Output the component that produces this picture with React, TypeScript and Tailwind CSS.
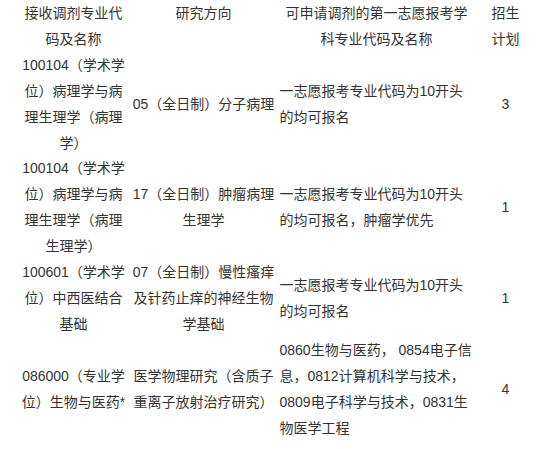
const rows: { major: string; dir: string; first: string; plan: string }[] = [
  {
    major: "100104（学术学位）病理学与病理生理学（病理学）",
    dir: "05（全日制）分子病理",
    first: "一志愿报考专业代码为10开头的均可报名",
    plan: "3",
  },
  {
    major: "100104（学术学位）病理学与病理生理学（病理生理学）",
    dir: "17（全日制）肿瘤病理生理学",
    first: "一志愿报考专业代码为10开头的均可报名，肿瘤学优先",
    plan: "1",
  },
  {
    major: "100601（学术学位）中西医结合基础",
    dir: "07（全日制）慢性瘙痒及针药止痒的神经生物学基础",
    first: "一志愿报考专业代码为10开头的均可报名",
    plan: "1",
  },
  {
    major: "086000（专业学位）生物与医药*",
    dir: "医学物理研究（含质子重离子放射治疗研究）",
    first:
      "0860生物与医药， 0854电子信息，0812计算机科学与技术，0809电子科学与技术，0831生物医学工程",
    plan: "4",
  },
];

export default function App() {
  return (
    <div
      className="min-h-screen bg-white pt-[1px] text-[14px] leading-[25.9px] text-[#333]"
      style={{ fontFamily: "'Liberation Sans', 'Noto Sans CJK SC', sans-serif" }}
    >
      <div className="ml-[17px] grid grid-cols-[113px_147px_199px_59px] items-center">
        <div className="px-[2.5px] text-center">接收调剂专业代码及名称</div>
        <div className="self-start px-[2.5px] text-center">研究方向</div>
        <div className="px-[2.5px] text-center">
          可申请调剂的第一志愿报考学科专业代码及名称
        </div>
        <div className="px-[10px] text-center">招生计划</div>

        {rows.map((r) => (
          <div key={r.dir} className="contents">
            <div className="px-[2.5px] text-center">{r.major}</div>
            <div className="px-[2.5px] text-center">{r.dir}</div>
            <div className="px-[2.5px] text-left">{r.first}</div>
            <div className="px-[10px] text-center">{r.plan}</div>
          </div>
        ))}
      </div>
    </div>
  );
}
